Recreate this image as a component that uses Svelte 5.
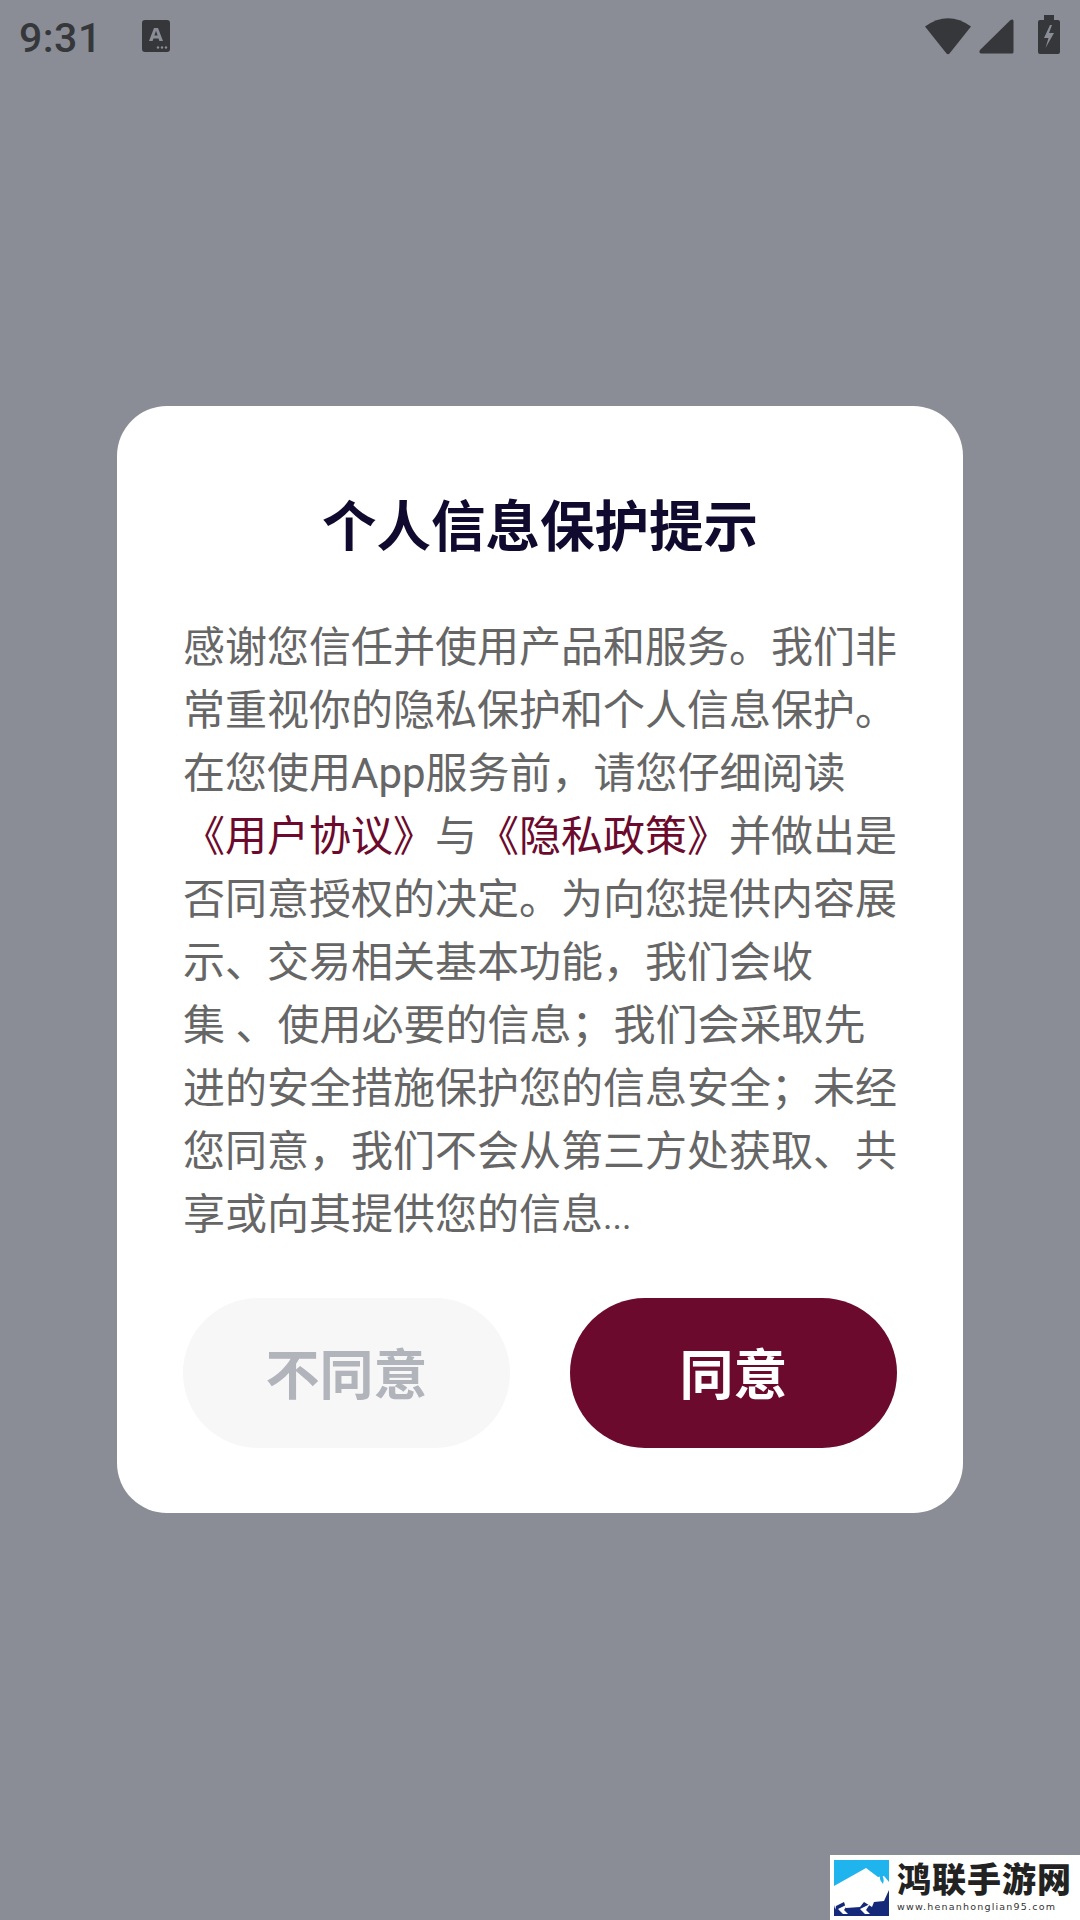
<script>
  const lines = [
    ["感谢您信任并使用产品和服务。我们非"],
    ["常重视你的隐私保护和个人信息保护。"],
    ["在您使用App服务前，请您仔细阅读"],
    [{ link: "《用户协议》" }, "与", { link: "《隐私政策》" }, "并做出是"],
    ["否同意授权的决定。为向您提供内容展"],
    ["示、交易相关基本功能，我们会收"],
    ["集 、使用必要的信息；我们会采取先"],
    ["进的安全措施保护您的信息安全；未经"],
    ["您同意，我们不会从第三方处获取、共"],
    ["享或向其提供您的信息", { dots: "..." }],
  ];
</script>

<div class="screen">
  <header class="status">
    <span class="time">9:31</span>
    <svg class="a-icon" viewBox="0 0 28 32" width="28" height="32" aria-hidden="true">
      <rect width="28" height="32" rx="3" fill="#36373b" />
      <path d="M7 21 12 8h4l5 13h-3.6l-.9-2.6h-5l-.9 2.6zm5.4-5.4h3.2L14 10.8z" fill="#8a8d95" />
      <circle cx="16" cy="27.5" r="1.2" fill="#8a8d95" />
      <circle cx="20" cy="27.5" r="1.2" fill="#8a8d95" />
      <circle cx="24" cy="27.5" r="1.2" fill="#8a8d95" />
    </svg>
    <div class="spacer"></div>
    <svg class="wifi" viewBox="0 0 46 37" width="46" height="37" aria-hidden="true">
      <path d="M0 8.500Q23-8 46 8.500L24.500 35.500Q23 37 21.500 35.500Z" fill="#36373b" />
    </svg>
    <svg class="signal" viewBox="0 0 35 35" width="35" height="35" aria-hidden="true">
      <path d="M1 31 31 1.500Q34-.5 34.500 2V33Q34.500 34.500 33 34.500H2Q-.5 34 1 31Z" fill="#36373b" />
    </svg>
    <svg class="battery" viewBox="0 0 22 39" width="22" height="39" aria-hidden="true">
      <path d="M6 0h10v5h4q2 0 2 2v30q0 2-2 2H2q-2 0-2-2V7q0-2 2-2h4z" fill="#36373b" />
      <path d="M12 10 6 23h4.500L7.500 33 16 18h-5l3-8z" fill="#8a8d95" />
    </svg>
  </header>

  <section class="dialog">
    <h1>个人信息保护提示</h1>
    <p class="body">
      {#each lines as line}
        <span class="line">
          {#each line as part}
            {#if typeof part === "string"}{part}{:else if part.dots}<span class="dots">{part.dots}</span>{:else}<span class="link">{part.link}</span>{/if}
          {/each}
        </span>
      {/each}
    </p>
    <div class="actions">
      <button class="btn ghost">不同意</button>
      <button class="btn primary">同意</button>
    </div>
  </section>

  <aside class="mark">
    <svg class="logo" viewBox="0 0 55 56" width="55" height="56" aria-hidden="true">
      <rect width="55" height="56" fill="#1fb4ee" />
      <path d="M0 26 16 17 32 8 44 17 50 16 55 22V56H0Z" fill="#fff" />
      <path d="M47 13Q44 19 49 24 51 19 47 13Z" fill="#1fb4ee" />
      <path d="M0 44 8 35 12 46 28 44 34 36 46 41 55 28V56H0Z" fill="#fff" />
      <path d="M0 45 3 56H0ZM40 42 50 41 55 30V56H0L2 46 10 42 12 48 26 47 30 42 38 47Z" fill="#14297a" />
      <path d="M4 49 14 44 10 50 14 54H9ZM26 49 36 44 32 50 36 54H31Z" fill="#fff" />
    </svg>
    <div class="brand">
      <span class="cn">鸿联手游网</span>
      <span class="url">www.henanhonglian95.com</span>
    </div>
  </aside>
</div>

<style>
  :global(body) {
    margin: 0;
  }
  .screen {
    position: relative;
    width: 1080px;
    height: 1920px;
    overflow: hidden;
    background: #8a8d95;
    font-family: Roboto, "Noto Sans CJK SC", sans-serif;
  }
  .status {
    display: flex;
    align-items: center;
    height: 72px;
    padding: 0 20px 0 19px;
  }
  .time {
    margin-top: 4px;
    font-size: 41px;
    font-weight: 500;
    color: #36373b;
    letter-spacing: 0.5px;
  }
  .a-icon {
    margin-left: 40px;
    margin-bottom: 1px;
  }
  .spacer {
    flex: 1;
  }
  .signal {
    margin-left: 8px;
    margin-top: 1px;
  }
  .battery {
    margin-left: 24px;
    margin-bottom: 3px;
  }
  .dialog {
    box-sizing: border-box;
    width: 846px;
    height: 1107px;
    margin: 334px auto 0;
    padding: 0 66px;
    background: #fff;
    border-radius: 50px;
  }
  h1 {
    margin: 0;
    padding-top: 82px;
    font-size: 54.500px;
    line-height: 78px;
    font-weight: 700;
    text-align: center;
    color: #0f0a2e;
  }
  .body {
    margin: 0;
    padding-top: 50px;
    font-size: 42px;
    line-height: 63px;
    color: #666;
    white-space: nowrap;
  }
  .line {
    display: block;
  }
  .link {
    color: #6b0a2c;
  }
  .dots {
    font-size: 36px;
  }
  .actions {
    display: flex;
    justify-content: space-between;
    margin-top: 49px;
  }
  .btn {
    width: 327px;
    height: 150px;
    border: 0;
    border-radius: 75px;
    padding: 0 0 3px;
    font-family: inherit;
    font-size: 54px;
    font-weight: 700;
  }
  .ghost {
    background: #f7f7f8;
    color: #b2b4bb;
  }
  .primary {
    background: #6b0a2c;
    color: #fff;
  }
  .mark {
    position: absolute;
    right: 0;
    bottom: 0;
    box-sizing: border-box;
    display: flex;
    gap: 8px;
    width: 250px;
    height: 65px;
    padding: 5px 0 0 4px;
    background: #fff;
  }
  .logo {
    flex: none;
  }
  .brand {
    display: flex;
    flex-direction: column;
    color: #222;
    white-space: nowrap;
  }
  .cn {
    font-size: 34px;
    line-height: 40px;
    font-weight: 900;
    letter-spacing: 1px;
  }
  .url {
    font-family: "DejaVu Sans", sans-serif;
    font-size: 9.500px;
    line-height: 13px;
    letter-spacing: 1.2px;
    color: #333;
  }
</style>
